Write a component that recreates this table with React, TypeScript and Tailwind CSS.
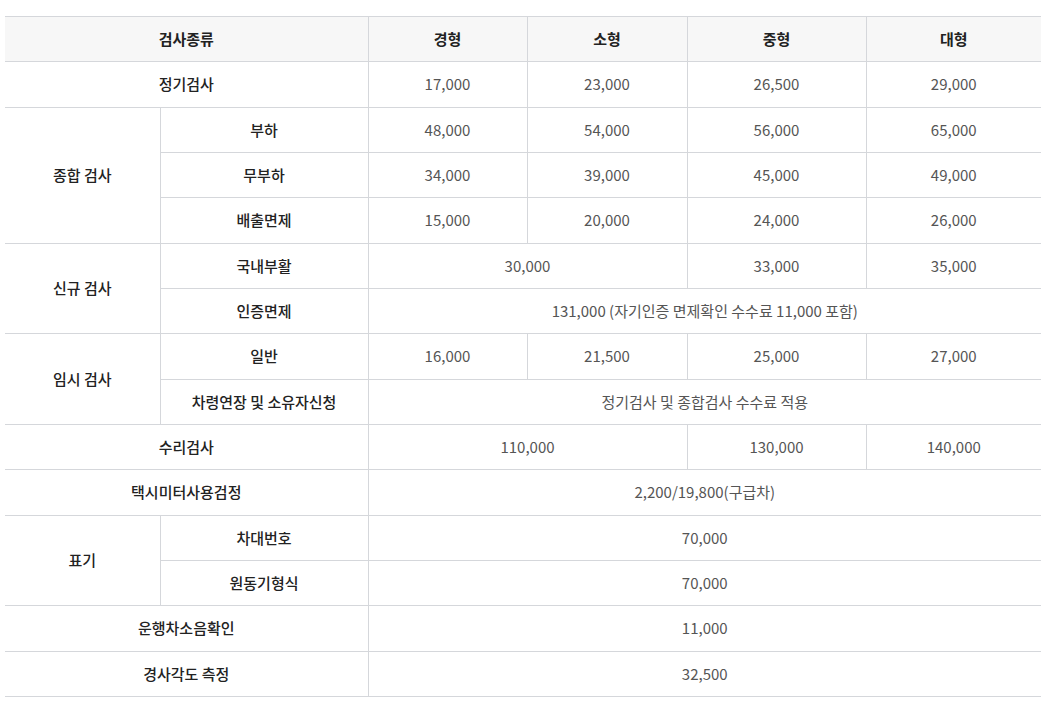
import React from "react";

const th = "h-[45.33px] border border-[#d5d7db] bg-[#f7f7f7] text-[15px] font-bold text-[#222] text-center last:border-r-0";
const lb = "h-[45.33px] border border-[#d5d7db] text-[15px] font-medium text-[#222] text-center";
const val = "h-[45.33px] border border-[#d5d7db] text-[15px] font-normal text-[#555] text-center last:border-r-0";

const prices: string[][] = [
  ["48,000", "54,000", "56,000", "65,000"],
  ["34,000", "39,000", "45,000", "49,000"],
  ["15,000", "20,000", "24,000", "26,000"],
];

export default function App() {
  return (
    <div
      className="bg-white w-[1042px] h-[702px] pt-[16px] pl-[5px]"
      style={{ fontFamily: '"Noto Sans CJK KR", "Noto Sans", sans-serif' }}
    >
      <table className="w-[1036px] table-fixed border-collapse">
        <colgroup>
          <col className="w-[155px]" />
          <col className="w-[208px]" />
          <col className="w-[159px]" />
          <col className="w-[160px]" />
          <col className="w-[179px]" />
          <col className="w-[175px]" />
        </colgroup>
        <thead>
          <tr>
            <th colSpan={2} className={`${th} border-l-0`}>검사종류</th>
            <th className={th}>경형</th>
            <th className={th}>소형</th>
            <th className={th}>중형</th>
            <th className={th}>대형</th>
          </tr>
        </thead>
        <tbody>
          <tr>
            <td colSpan={2} className={`${lb} border-l-0`}>정기검사</td>
            <td className={val}>17,000</td>
            <td className={val}>23,000</td>
            <td className={val}>26,500</td>
            <td className={val}>29,000</td>
          </tr>
          {["부하", "무부하", "배출면제"].map((name, i) => (
            <tr key={name}>
              {i === 0 && (
                <td rowSpan={3} className={`${lb} border-l-0`}>종합 검사</td>
              )}
              <td className={lb}>{name}</td>
              {prices[i].map((p, j) => (
                <td key={j} className={val}>{p}</td>
              ))}
            </tr>
          ))}
          <tr>
            <td rowSpan={2} className={`${lb} border-l-0`}>신규 검사</td>
            <td className={lb}>국내부활</td>
            <td colSpan={2} className={val}>30,000</td>
            <td className={val}>33,000</td>
            <td className={val}>35,000</td>
          </tr>
          <tr>
            <td className={lb}>인증면제</td>
            <td colSpan={4} className={val}>131,000 (자기인증 면제확인 수수료 11,000 포함)</td>
          </tr>
          <tr>
            <td rowSpan={2} className={`${lb} border-l-0`}>임시 검사</td>
            <td className={lb}>일반</td>
            <td className={val}>16,000</td>
            <td className={val}>21,500</td>
            <td className={val}>25,000</td>
            <td className={val}>27,000</td>
          </tr>
          <tr>
            <td className={lb}>차령연장 및 소유자신청</td>
            <td colSpan={4} className={val}>정기검사 및 종합검사 수수료 적용</td>
          </tr>
          <tr>
            <td colSpan={2} className={`${lb} border-l-0`}>수리검사</td>
            <td colSpan={2} className={val}>110,000</td>
            <td className={val}>130,000</td>
            <td className={val}>140,000</td>
          </tr>
          <tr>
            <td colSpan={2} className={`${lb} border-l-0`}>택시미터사용검정</td>
            <td colSpan={4} className={val}>2,200/19,800(구급차)</td>
          </tr>
          <tr>
            <td rowSpan={2} className={`${lb} border-l-0`}>표기</td>
            <td className={lb}>차대번호</td>
            <td colSpan={4} className={val}>70,000</td>
          </tr>
          <tr>
            <td className={lb}>원동기형식</td>
            <td colSpan={4} className={val}>70,000</td>
          </tr>
          <tr>
            <td colSpan={2} className={`${lb} border-l-0`}>운행차소음확인</td>
            <td colSpan={4} className={val}>11,000</td>
          </tr>
          <tr>
            <td colSpan={2} className={`${lb} border-l-0`}>경사각도 측정</td>
            <td colSpan={4} className={val}>32,500</td>
          </tr>
        </tbody>
      </table>
    </div>
  );
}
